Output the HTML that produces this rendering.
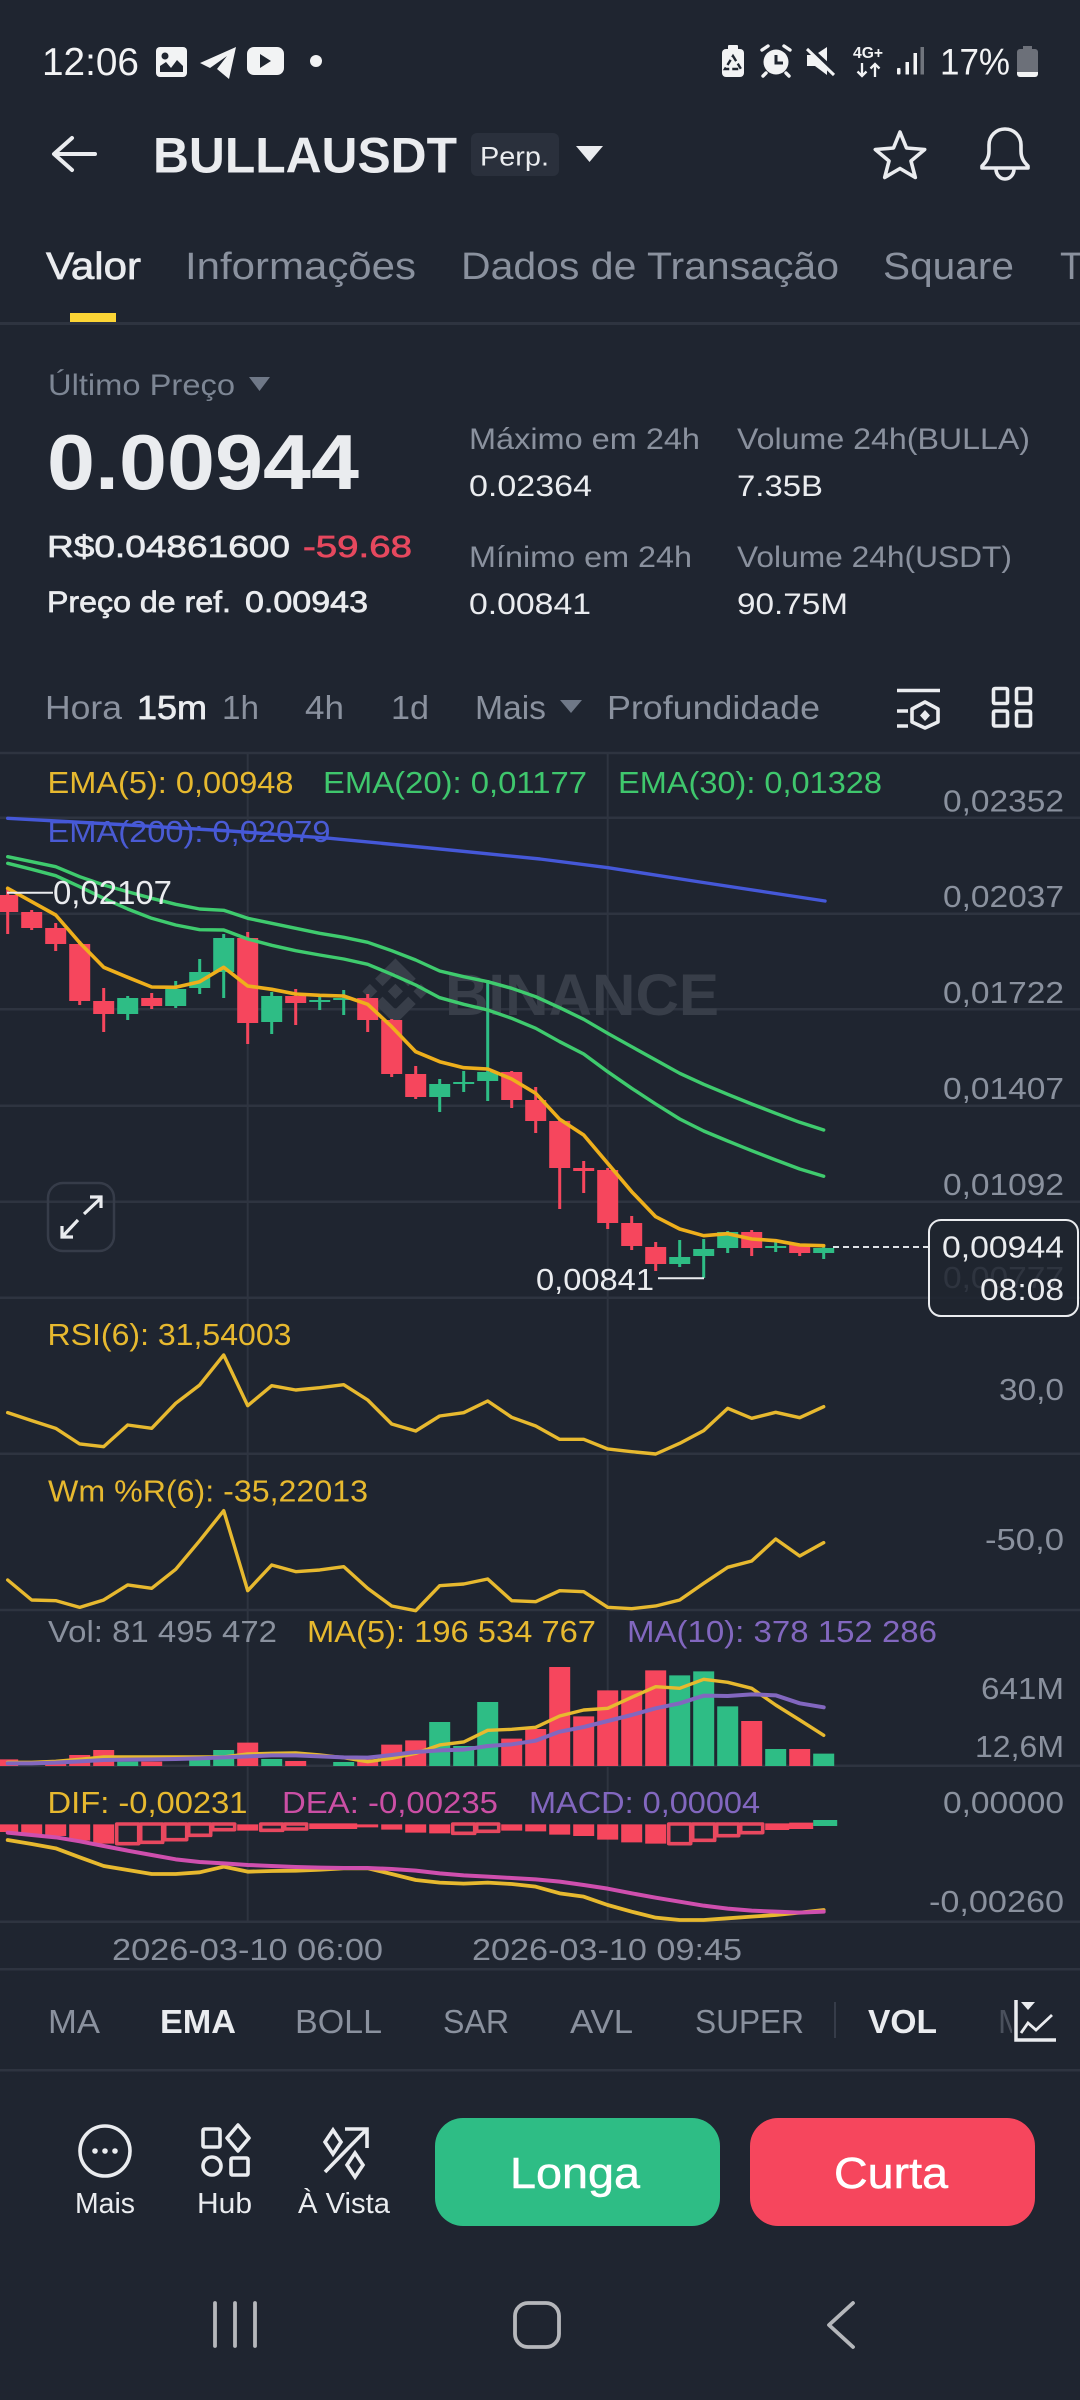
<!DOCTYPE html>
<html><head><meta charset="utf-8"><title>BULLAUSDT</title>
<style>
html,body{margin:0;padding:0;background:#1f2530;width:1080px;height:2400px;overflow:hidden}
svg{display:block;position:absolute;left:0;top:0}
text{font-family:"Liberation Sans",sans-serif;white-space:pre}
.g{fill:#8a919e}.w{fill:#eaecef}.d{fill:#7d8694}
.m{stroke:#eaecef;stroke-width:.7}
.l{fill:none;stroke-linejoin:round;stroke-linecap:round;vector-effect:non-scaling-stroke}
</style></head><body>
<svg width="1080" height="2400" viewBox="0 0 1080 2400" xmlns="http://www.w3.org/2000/svg">
<rect width="1080" height="2400" fill="#1f2530"/>

<!-- status bar -->
<g fill="#f2f3f4">
<text x="42" y="75" font-size="39" textLength="97" lengthAdjust="spacingAndGlyphs" fill="#f2f3f4">12:06</text>
<rect x="156" y="47" width="31" height="30" rx="4"/>
<circle cx="165" cy="56" r="3.500" fill="#1f2530"/>
<path d="M160 72 L160 66 L166 62 L171 68 L177 60 L183 66 L183 72z" fill="#1f2530"/>
<path d="M200 63 L236 47 L229 79 L217 69 L227 56 L210 68z"/>
<rect x="247" y="47" width="37" height="28" rx="7"/>
<path d="M260 54 L271 61 L260 68z" fill="#1f2530"/>
<circle cx="316" cy="61" r="6"/>
<rect x="722" y="49" width="22" height="28" rx="4"/><rect x="728" y="45" width="10" height="5" rx="1"/>
<path d="M733 56 L741 69 H725z" fill="none" stroke="#1f2530" stroke-width="2.400" stroke-dasharray="6 3"/>
<circle cx="776" cy="62" r="12.500"/>
<path d="M776 55 V63 H783" fill="none" stroke="#1f2530" stroke-width="3"/>
<path d="M762 50 L768 46 M790 50 L784 46 M766 73 l-3 3 M786 73 l3 3" fill="none" stroke="#f2f3f4" stroke-width="3.400" stroke-linecap="round"/>
<path d="M807 55 H815 L827 47 V75 L815 66 H807z"/>
<path d="M804 44 L834 72" stroke="#1f2530" stroke-width="6" fill="none"/><path d="M808 48 L835 74" stroke="#f2f3f4" stroke-width="3" fill="none" transform="translate(-1 1)"/>
<text x="853" y="58" font-size="15.500" font-weight="bold" textLength="30" lengthAdjust="spacingAndGlyphs" fill="#f2f3f4">4G+</text>
<path d="M862 63 V76 M857.500 71.500 L862 76 L866.500 71.500 M875 77 V64 M870.500 68.500 L875 64 L879.500 68.500" fill="none" stroke="#f2f3f4" stroke-width="2.300"/>
<rect x="897" y="68" width="3.500" height="6.500" rx="1"/><rect x="905.500" y="62" width="3.500" height="12.500"/><rect x="913.500" y="53" width="3.500" height="21.500"/><rect x="920.500" y="47" width="3.500" height="27.500" fill="#70757d"/>
<text x="940" y="74.500" font-size="37" textLength="70" lengthAdjust="spacingAndGlyphs" fill="#f2f3f4">17%</text>
<path d="M1023 46 h9 v3 h3 a3 3 0 0 1 3 3 v20 h-21 v-20 a3 3 0 0 1 3 -3 h3z" fill="#6c7079"/>
<path d="M1017 72 h21 v2 a3 3 0 0 1 -3 3 h-15 a3 3 0 0 1 -3 -3z"/>
</g>

<!-- header -->
<path d="M95 154 H55 M72 138 L54 154 L72 170" fill="none" stroke="#eaecef" stroke-width="4" stroke-linecap="round" stroke-linejoin="round"/>
<text class="w" x="153" y="172.700" font-size="50" font-weight="bold" textLength="304" lengthAdjust="spacingAndGlyphs">BULLAUSDT</text>
<rect x="471" y="133" width="88" height="43" rx="6" fill="#2a303c"/>
<text class="w" x="480" y="165.700" font-size="27" textLength="69" lengthAdjust="spacingAndGlyphs">Perp.</text>
<path d="M576 146 H603 L589.500 162z" fill="#eaecef"/>
<path d="M900 132 L906.500 148 L924.700 149.500 L911 161 L915.300 177.500 L900 168.500 L884.700 177.500 L889 161 L875.300 149.500 L893.500 148z" fill="none" stroke="#eaecef" stroke-width="3.600" stroke-linejoin="round"/>
<path d="M1005 129 c-9 0 -16 7 -16 16 v6 c0 8 -4 12 -7 15 v2 h46 v-2 c-3 -3 -7 -7 -7 -15 v-6 c0 -9 -7 -16 -16 -16z M996 169 a9 10 0 0 0 18 0" fill="none" stroke="#eaecef" stroke-width="3.600" stroke-linejoin="round"/>

<!-- tabs -->
<text class="w m" x="46" y="279" font-size="38" textLength="95" lengthAdjust="spacingAndGlyphs">Valor</text>
<text class="g" x="185" y="279" font-size="38" textLength="231" lengthAdjust="spacingAndGlyphs">Informações</text>
<text class="g" x="461" y="279" font-size="38" textLength="378" lengthAdjust="spacingAndGlyphs">Dados de Transação</text>
<text class="g" x="883" y="279" font-size="38" textLength="131" lengthAdjust="spacingAndGlyphs">Square</text>
<text class="g" x="1060" y="279" font-size="38">T</text>
<rect x="0" y="322" width="1080" height="3" fill="#2e3440"/>
<rect x="70" y="313" width="46" height="9" fill="#fcd535"/>

<!-- price -->
<text class="d" x="48" y="395" font-size="30" textLength="187" lengthAdjust="spacingAndGlyphs">Último Preço</text>
<path d="M249 377 H270 L259.500 391z" fill="#6f7887"/>
<text class="w" x="47" y="489" font-size="78" font-weight="bold" textLength="312" lengthAdjust="spacingAndGlyphs">0.00944</text>
<text class="w m" x="47" y="557" font-size="31" textLength="243" lengthAdjust="spacingAndGlyphs">R$0.04861600</text>
<text x="303" y="557" font-size="31" fill="#e6485e" stroke="#e6485e" stroke-width=".7" textLength="109" lengthAdjust="spacingAndGlyphs">-59.68</text>
<text class="w m" x="47" y="612" font-size="30" textLength="184" lengthAdjust="spacingAndGlyphs">Preço de ref.</text>
<text class="w m" x="245" y="612" font-size="30" textLength="123" lengthAdjust="spacingAndGlyphs">0.00943</text>
<text class="g" x="469" y="449" font-size="30" textLength="231" lengthAdjust="spacingAndGlyphs">Máximo em 24h</text>
<text class="g" x="737" y="449" font-size="30" textLength="293" lengthAdjust="spacingAndGlyphs">Volume 24h(BULLA)</text>
<text class="w" x="469" y="496" font-size="30" textLength="123" lengthAdjust="spacingAndGlyphs">0.02364</text>
<text class="w" x="737" y="496" font-size="30" textLength="86" lengthAdjust="spacingAndGlyphs">7.35B</text>
<text class="g" x="469" y="567" font-size="30" textLength="223" lengthAdjust="spacingAndGlyphs">Mínimo em 24h</text>
<text class="g" x="737" y="567" font-size="30" textLength="275" lengthAdjust="spacingAndGlyphs">Volume 24h(USDT)</text>
<text class="w" x="469" y="614" font-size="30" textLength="122" lengthAdjust="spacingAndGlyphs">0.00841</text>
<text class="w" x="737" y="614" font-size="30" textLength="111" lengthAdjust="spacingAndGlyphs">90.75M</text>

<!-- timeframes -->
<text class="g" x="45" y="719" font-size="33" textLength="77" lengthAdjust="spacingAndGlyphs">Hora</text>
<text class="w m" x="137" y="719" font-size="33" textLength="70" lengthAdjust="spacingAndGlyphs">15m</text>
<text class="g" x="222" y="719" font-size="33" textLength="37" lengthAdjust="spacingAndGlyphs">1h</text>
<text class="g" x="305" y="719" font-size="33" textLength="39" lengthAdjust="spacingAndGlyphs">4h</text>
<text class="g" x="391" y="719" font-size="33" textLength="38" lengthAdjust="spacingAndGlyphs">1d</text>
<text class="g" x="475" y="719" font-size="33" textLength="71" lengthAdjust="spacingAndGlyphs">Mais</text>
<path d="M560 700 H582 L571 713z" fill="#6f7887"/>
<text class="g" x="607" y="719" font-size="33" textLength="213" lengthAdjust="spacingAndGlyphs">Profundidade</text>
<g fill="none" stroke="#eaecef" stroke-width="3.600">
<path d="M897 690.500 H940 M897 711 H908 M897 726 H908"/>
<path d="M925 702 L938 709 V722 L925 728 L912 722 V709z" stroke-linejoin="round"/>
<path d="M925 710 L930 715.500 L925 721 L920 715.500z" fill="#eaecef" stroke="none"/>
<rect x="993.500" y="688.500" width="14" height="15" rx="1.500"/><rect x="1016.500" y="688.500" width="14" height="15" rx="1.500"/>
<rect x="993.500" y="711" width="14" height="15" rx="1.500"/><rect x="1016.500" y="711" width="14" height="15" rx="1.500"/>
</g>

<!-- chart grid -->
<g stroke="#2e3440" stroke-width="2.500">
<path d="M0 753 H1080 M0 817.700 H1080 M0 913.700 H1080 M0 1009.300 H1080 M0 1105.700 H1080 M0 1201.700 H1080 M0 1297.700 H1080 M0 1453.700 H1080 M0 1610 H1080 M0 1765.700 H1080 M0 1921.700 H1080 M0 1969.300 H1080"/>
<path d="M247.700 754 V1921 M607.700 754 V1921" stroke-width="2"/>
</g>

<!-- watermark -->
<g fill="#383e49">
<path transform="translate(362 958) scale(.53)" d="M38.730 53.200L63 28.950l24.280 24.280 14.120-14.120L63 .71 24.600 39.090zM.72 63l14.120-14.120L28.960 63 14.840 77.100zM38.730 72.800L63 97.050l24.280-24.280 14.120 14.100L63 125.290 24.600 86.900l-.02-.02zM97.040 63l14.120-14.120L125.280 63l-14.120 14.120zM77.320 63L63 48.670 52.400 59.260l-1.220 1.220-2.500 2.500L63 77.300 77.320 63z"/>
<text x="445" y="1015" font-size="58" font-weight="bold" fill="#383e49" textLength="274" lengthAdjust="spacingAndGlyphs">BINANCE</text>
</g>

<!-- legends -->
<text x="47.500" y="793" font-size="31" fill="#e7b92f" textLength="246" lengthAdjust="spacingAndGlyphs">EMA(5): 0,00948</text>
<text x="323" y="793" font-size="31" fill="#3fc76d" textLength="264" lengthAdjust="spacingAndGlyphs">EMA(20): 0,01177</text>
<text x="618" y="793" font-size="31" fill="#3fc76d" textLength="264" lengthAdjust="spacingAndGlyphs">EMA(30): 0,01328</text>
<text x="47.500" y="842" font-size="31" fill="#4a5bd4" textLength="283" lengthAdjust="spacingAndGlyphs">EMA(200): 0,02079</text>

<!-- right labels -->
<g fill="#8a919e" font-size="31">
<text x="943" y="811.700" textLength="121" lengthAdjust="spacingAndGlyphs">0,02352</text>
<text x="943" y="907" textLength="121" lengthAdjust="spacingAndGlyphs">0,02037</text>
<text x="943" y="1003" textLength="121" lengthAdjust="spacingAndGlyphs">0,01722</text>
<text x="943" y="1099" textLength="121" lengthAdjust="spacingAndGlyphs">0,01407</text>
<text x="943" y="1195" textLength="121" lengthAdjust="spacingAndGlyphs">0,01092</text>
<text x="943" y="1288" textLength="121" lengthAdjust="spacingAndGlyphs">0,00777</text>
<text x="999" y="1400" textLength="65" lengthAdjust="spacingAndGlyphs">30,0</text>
<text x="985" y="1550" textLength="79" lengthAdjust="spacingAndGlyphs">-50,0</text>
<text x="981" y="1699" textLength="83" lengthAdjust="spacingAndGlyphs">641M</text>
<text x="975" y="1757" textLength="89" lengthAdjust="spacingAndGlyphs">12,6M</text>
<text x="943" y="1813" textLength="121" lengthAdjust="spacingAndGlyphs">0,00000</text>
<text x="929" y="1912" textLength="135" lengthAdjust="spacingAndGlyphs">-0,00260</text>
</g>

<!-- candles -->
<g transform="translate(7.700 0)">
<path stroke="#f6465d" stroke-width="3" d="M0 888V934M24 910V930M48 923V951M72 941V1005M96 988V1032M144 993V1009M240 932V1044M288 989V1025M360 994V1032M384 1019V1077M408 1066V1099M504 1071V1108M528 1087V1133M552 1120V1209M576 1161V1193M600 1168V1229M624 1216V1250M648 1242V1271M744 1230V1256M792 1244V1256"/>
<path stroke="#2ebd85" stroke-width="3" d="M120 996V1020M168 981V1008M192 959V994M216 934V998M264 992V1034M312 995V1010M336 990V1015M432 1079V1112M456 1071V1092M480 980V1101M672 1240V1267M696 1239V1278M720 1231V1253M768 1242V1252M816 1247V1259"/>
<path fill="#f6465d" d="M-10.500 895h21V912h-21zM13.500 912h21V928h-21zM37.500 928h21V944h-21zM61.500 944h21V1001h-21zM85.500 1001h21V1014h-21zM133.500 998h21V1006h-21zM229.500 938h21V1023h-21zM277.500 996h21V1003h-21zM349.500 998h21V1020h-21zM373.500 1020h21V1074h-21zM397.500 1074h21V1097h-21zM493.500 1072h21V1100h-21zM517.500 1100h21V1121h-21zM541.500 1121h21V1168h-21zM565.500 1168h21V1171h-21zM589.500 1170h21V1223h-21zM613.500 1223h21V1246h-21zM637.500 1247h21V1264h-21zM733.500 1232h21V1248h-21zM781.500 1245h21V1253h-21z"/>
<path fill="#2ebd85" d="M109.500 998h21V1014h-21zM157.500 989h21V1006h-21zM181.500 972h21V988h-21zM205.500 938h21V972h-21zM253.500 996h21V1022h-21zM301.500 1000h21V1002h-21zM325.500 998h21V1000h-21zM421.500 1084h21V1097h-21zM445.500 1082h21V1084h-21zM469.500 1072h21V1081h-21zM661.500 1257h21V1264h-21zM685.500 1249h21V1256h-21zM709.500 1232h21V1248h-21zM757.500 1246h21V1248h-21zM805.500 1248h21V1253h-21z"/>
</g>

<!-- EMA lines -->
<polyline class="l" stroke="#4558d8" stroke-width="3.400" points="7.700,818.300 120,824.500 230,831 330,838.300 430,848 540,859 608,867.700 700,882 825,901"/>
<g transform="translate(7.700 0) scale(24 1)">
<polyline class="l" stroke="#3fcb6e" stroke-width="3.400" points="0,856.700 1,861.700 2,866.700 3,876.700 4,885 5,891.700 6,898.300 7,904.300 8,909 9,910.300 10,918.300 11,923.300 12,928.300 13,933.300 14,937.300 15,942.300 16,950.700 17,960 18,971 19,976.700 20,981.700 21,988.300 22,996.700 23,1007.700 24,1019.300 25,1033.300 26,1046.700 27,1060 28,1073.300 29,1084.300 30,1094.300 31,1104 32,1113.300 33,1122.300 34,1130"/>
<polyline class="l" stroke="#3fcb6e" stroke-width="3.400" points="0,863.300 1,869.300 2,875.700 3,886.700 4,898.300 5,909 6,918.300 7,925 8,929.700 9,930 10,939 11,945.300 12,950.700 13,955 14,959 15,964.300 16,974.300 17,985 18,997.700 19,1004.300 20,1010 21,1018.300 22,1028.300 23,1041.700 24,1054 25,1071.700 26,1088.300 27,1104 28,1119 29,1131 30,1141 31,1150.700 32,1160 33,1169 34,1176.300"/>
<polyline class="l" stroke="#eeaf1c" stroke-width="3.600" points="0,888.300 1,901.700 2,915 3,942.700 4,967.300 5,977.300 6,987 7,987.300 8,981.700 9,967.300 10,986 11,989.300 12,994 13,995.300 14,996 15,1004.300 16,1026.700 17,1051.700 18,1061.700 19,1067.700 20,1069 21,1079 22,1093.300 23,1119.300 24,1135 25,1163.300 26,1191.700 27,1216.700 28,1229 29,1235.700 30,1233.700 31,1239 32,1240.700 33,1245 34,1245.700"/>
</g>

<!-- high low labels -->
<path d="M7 892.700 H53 M658 1278.300 H704" stroke="#eaecef" stroke-width="2" fill="none"/>
<text class="w" x="53" y="904" font-size="33" textLength="119" lengthAdjust="spacingAndGlyphs">0,02107</text>
<text class="w" x="536" y="1290" font-size="31" textLength="118" lengthAdjust="spacingAndGlyphs">0,00841</text>

<!-- expand -->
<rect x="48" y="1183" width="66" height="68" rx="15" fill="none" stroke="#363c49" stroke-width="2.500"/>
<path d="M84 1214 L101 1198 M90 1197 H101 V1208 M78 1220 L62 1237 M62 1226 V1237 H73" fill="none" stroke="#eaecef" stroke-width="3.200"/>

<!-- last price -->
<path d="M833 1247 H928" stroke="#dfe2e6" stroke-width="2" stroke-dasharray="6 4"/>
<rect x="929" y="1220" width="149" height="96" rx="12" fill="#1f2530" fill-opacity=".86" stroke="#eaecef" stroke-width="2"/>
<text class="w" x="942" y="1257.700" font-size="31" textLength="122" lengthAdjust="spacingAndGlyphs">0,00944</text>
<text class="w" x="980" y="1300" font-size="31" textLength="84" lengthAdjust="spacingAndGlyphs">08:08</text>

<!-- RSI / WR -->
<text x="47.500" y="1345" font-size="31" fill="#e7b92f" textLength="244" lengthAdjust="spacingAndGlyphs">RSI(6): 31,54003</text>
<text x="48" y="1501.700" font-size="31" fill="#e7b92f" textLength="320" lengthAdjust="spacingAndGlyphs">Wm %R(6): -35,22013</text>
<g transform="translate(7.700 1090) scale(24 .33333)">
<polyline class="l" stroke="#e7b92f" stroke-width="3.400" points="0,968 1,992 2,1015 3,1062 4,1070 5,1005 6,1015 7,940 8,885 9,795 10,947 11,887 12,900 13,893 14,884 15,930 16,1002 17,1023 18,978 19,968 20,933 21,982 22,1008 23,1048 24,1048 25,1077 26,1085 27,1092 28,1060 29,1022 30,955 31,985 32,967 33,983 34,950"/>
<polyline class="l" stroke="#e7b92f" stroke-width="3.400" points="0,1470 1,1530 2,1532 3,1552 4,1530 5,1485 6,1495 7,1438 8,1352 9,1262 10,1502 11,1425 12,1445 13,1440 14,1430 15,1495 16,1548 17,1562 18,1487 19,1482 20,1467 21,1532 22,1535 23,1502 24,1505 25,1552 26,1556 27,1548 28,1530 29,1480 30,1432 31,1413 32,1347 33,1398 34,1358"/>
</g>

<!-- Volume -->
<text class="g" x="48" y="1642" font-size="31" textLength="229" lengthAdjust="spacingAndGlyphs">Vol: 81 495 472</text>
<text x="307" y="1642" font-size="31" fill="#e7b92f" textLength="289" lengthAdjust="spacingAndGlyphs">MA(5): 196 534 767</text>
<text x="627" y="1642" font-size="31" fill="#8267bf" textLength="310" lengthAdjust="spacingAndGlyphs">MA(10): 378 152 286</text>
<g transform="translate(7.700 1620) scale(1 .33333)">
<path fill="#f6465d" d="M-10.500 418h21V438h-21zM37.500 422h21V438h-21zM61.500 405h21V438h-21zM85.500 390h21V438h-21zM133.500 425h21V438h-21zM229.500 368h21V438h-21zM277.500 423h21V438h-21zM349.500 418h21V438h-21zM373.500 374h21V438h-21zM397.500 361h21V438h-21zM493.500 356h21V438h-21zM517.500 327h21V438h-21zM541.500 141h21V438h-21zM565.500 289h21V438h-21zM589.500 211h21V438h-21zM613.500 211h21V438h-21zM637.500 151h21V438h-21zM733.500 303h21V438h-21zM781.500 387h21V438h-21z"/>
<path fill="#2ebd85" d="M109.500 425h21V438h-21zM181.500 420h21V438h-21zM205.500 390h21V438h-21zM253.500 417h21V438h-21zM325.500 426h21V438h-21zM421.500 306h21V438h-21zM445.500 378h21V438h-21zM469.500 246h21V438h-21zM661.500 166h21V438h-21zM685.500 154h21V438h-21zM709.500 259h21V438h-21zM757.500 387h21V438h-21zM805.500 401h21V438h-21z"/>
</g>
<g transform="translate(7.700 1620) scale(24 .33333)">
<polyline class="l" stroke="#e7b92f" stroke-width="3.400" points="0,427 1,427 2,424 3,418 4,411 5,411 6,411 7,411 8,411 9,411 10,402 11,400 12,399 13,405 14,413 15,425 16,415 17,400 18,375 19,366 20,331 21,328 22,322 23,288 24,270 25,265 26,232 27,200 28,205 29,178 30,187 31,205 32,255 33,300 34,346"/>
<polyline class="l" stroke="#8267bf" stroke-width="4" points="0,430 1,430 2,428 3,424 4,420 5,419 6,418 7,417 8,415 9,412 10,409 11,406 12,406 13,409 14,412 15,413 16,405 17,396 18,391 19,389 20,378 21,373 22,362 23,335 24,321 25,303 26,285 27,265 28,250 29,227 30,228 31,223 32,226 33,250 34,262"/>
</g>

<!-- MACD -->
<text x="47.500" y="1813" font-size="31" fill="#e7b92f" textLength="200" lengthAdjust="spacingAndGlyphs">DIF: -0,00231</text>
<text x="282" y="1813" font-size="31" fill="#cb4fa5" textLength="216" lengthAdjust="spacingAndGlyphs">DEA: -0,00235</text>
<text x="529" y="1813" font-size="31" fill="#8267bf" textLength="231" lengthAdjust="spacingAndGlyphs">MACD: 0,00004</text>
<g transform="translate(7.700 1620) scale(1 .33333)">
<path fill="#f6465d" d="M-10.500 613h21V636h-21zM13.500 613h21V642h-21zM37.500 613h21V648h-21zM61.500 613h21V662h-21zM85.500 613h21V671h-21zM229.500 613h21V632h-21zM301.500 610h24V627h-24zM325.500 610h24V627h-24zM349.500 613h21V622h-21zM373.500 613h21V629h-21zM397.500 613h21V638h-21zM421.500 613h21V640h-21zM493.500 613h21V632h-21zM517.500 613h21V634h-21zM541.500 613h21V644h-21zM565.500 613h21V648h-21zM589.500 613h21V659h-21zM613.500 613h21V667h-21zM637.500 613h21V671h-21zM757.500 610h24V630h-24zM781.500 608h24V627h-24z"/>
<path fill="#2ebd85" d="M805.500 600h24V618h-24z"/>
<g fill="none" stroke="#e8485f" stroke-width="3.600">
<rect class="l" x="109" y="612" width="22" height="59"/><rect class="l" x="133" y="612" width="22" height="55"/><rect class="l" x="157" y="612" width="22" height="47"/><rect class="l" x="181" y="612" width="22" height="34"/><rect class="l" x="205" y="612" width="22" height="17"/>
<rect class="l" x="253" y="612" width="22" height="19"/><rect class="l" x="277" y="612" width="22" height="15"/>
<rect class="l" x="445" y="612" width="22" height="28"/><rect class="l" x="469" y="612" width="22" height="22"/>
<rect class="l" x="661" y="612" width="22" height="59"/><rect class="l" x="685" y="612" width="22" height="49"/><rect class="l" x="709" y="612" width="22" height="35"/><rect class="l" x="733" y="612" width="22" height="26"/>
</g>
</g>
<g transform="translate(7.700 1620) scale(24 .33333)">
<polyline class="l" stroke="#e7b92f" stroke-width="3.800" points="0,660 1,672 2,685 3,712 4,738 5,750 6,762 7,762 8,757 9,740 10,755 11,753 12,752 13,749 14,745 15,745 16,762 17,780 18,788 19,791 20,788 21,792 22,800 23,820 24,830 25,855 26,875 27,893 28,900 29,900 30,895 31,890 32,885 33,878 34,870"/>
<polyline class="l" stroke="#cf4fae" stroke-width="4" points="0,638 1,645 2,652 3,664 4,678 5,692 6,705 7,718 8,726 9,730 10,735 11,738 12,741 13,743 14,744 15,744 16,747 17,752 18,760 19,766 20,770 21,774 22,778 23,785 24,795 25,806 26,820 27,833 28,845 29,857 30,866 31,872 32,875 33,878 34,875"/>
</g>

<!-- time axis -->
<text class="g" x="112" y="1960" font-size="31" textLength="271" lengthAdjust="spacingAndGlyphs">2026-03-10 06:00</text>
<text class="g" x="472" y="1960" font-size="31" textLength="270" lengthAdjust="spacingAndGlyphs">2026-03-10 09:45</text>

<!-- indicator row -->
<text class="g" x="48" y="2033" font-size="33" textLength="52" lengthAdjust="spacingAndGlyphs">MA</text>
<text class="w" x="160" y="2033" font-size="33" font-weight="bold" textLength="76" lengthAdjust="spacingAndGlyphs">EMA</text>
<text class="g" x="295" y="2033" font-size="33" textLength="87" lengthAdjust="spacingAndGlyphs">BOLL</text>
<text class="g" x="443" y="2033" font-size="33" textLength="66" lengthAdjust="spacingAndGlyphs">SAR</text>
<text class="g" x="570" y="2033" font-size="33" textLength="63" lengthAdjust="spacingAndGlyphs">AVL</text>
<text class="g" x="695" y="2033" font-size="33" textLength="109" lengthAdjust="spacingAndGlyphs">SUPER</text>
<rect x="834" y="2002" width="2" height="36" fill="#363c49"/>
<text class="w" x="868" y="2033" font-size="33" font-weight="bold" textLength="69" lengthAdjust="spacingAndGlyphs">VOL</text>
<text x="998" y="2033" font-size="33" fill="#4a505c">M</text>
<rect x="1012" y="1996" width="48" height="48" fill="#1f2530"/>
<path d="M1016 2000 V2040 H1056" fill="none" stroke="#eaecef" stroke-width="3.500"/>
<path d="M1021 2002 H1035 L1028 2010z" fill="#eaecef"/>
<path d="M1021 2033 L1028 2023 L1036 2030 L1052 2015" fill="none" stroke="#eaecef" stroke-width="2.800"/>
<rect x="0" y="2069" width="1080" height="2.500" fill="#2e3440"/>

<!-- bottom actions -->
<g fill="none" stroke="#eaecef" stroke-width="3.600">
<circle cx="105" cy="2151" r="25"/>
<rect x="203" y="2129" width="17" height="18" rx="1.500"/>
<path d="M238 2125 L249 2138 L238 2151 L227 2138z" stroke-linejoin="round"/>
<circle cx="212" cy="2166" r="9"/>
<rect x="231" y="2158" width="17" height="17" rx="1.500"/>
<path d="M325 2172 L366 2130 M345 2129 H367 V2148"/>
<path d="M333 2130 L341 2142 L333 2154 L325 2142z"/>
<path d="M355 2153 L363 2165 L355 2177 L347 2165z"/>
</g>
<g fill="#eaecef"><circle cx="95" cy="2151" r="2.800"/><circle cx="105" cy="2151" r="2.800"/><circle cx="115" cy="2151" r="2.800"/></g>
<text class="w" x="75" y="2213" font-size="29" textLength="60" lengthAdjust="spacingAndGlyphs">Mais</text>
<text class="w" x="197" y="2213" font-size="29" textLength="55" lengthAdjust="spacingAndGlyphs">Hub</text>
<text class="w" x="298" y="2213" font-size="29" textLength="92" lengthAdjust="spacingAndGlyphs">À Vista</text>
<rect x="435" y="2118" width="285" height="108" rx="28" fill="#2ebd85"/>
<rect x="750" y="2118" width="285" height="108" rx="28" fill="#f6465d"/>
<text x="510" y="2188" font-size="44" fill="#fff" stroke="#fff" stroke-width=".5" textLength="130" lengthAdjust="spacingAndGlyphs">Longa</text>
<text x="834" y="2188" font-size="44" fill="#fff" stroke="#fff" stroke-width=".5" textLength="114" lengthAdjust="spacingAndGlyphs">Curta</text>

<!-- nav bar -->
<g fill="none" stroke="#b5b7bb" stroke-width="3.800" stroke-linecap="round" stroke-linejoin="round">
<path d="M215 2303 V2346 M235 2303 V2346 M255 2303 V2346"/>
<rect x="515" y="2303" width="44" height="44" rx="13"/>
<path d="M853 2303 L829 2325 L853 2347"/>
</g>
</svg>
</body></html>
